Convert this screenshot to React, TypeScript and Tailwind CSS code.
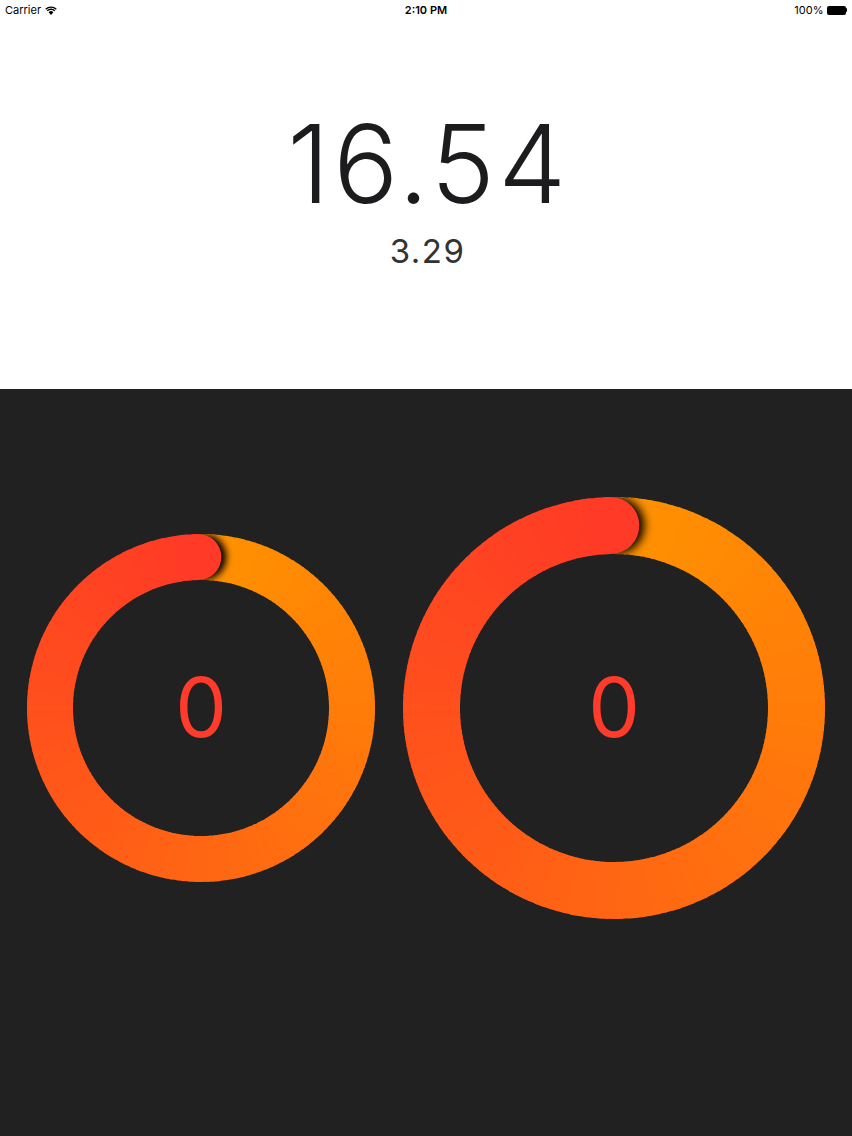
import { useId } from "react";

const START = [255, 146, 0];
const END = [255, 58, 38];

function mix(t: number) {
  const c = START.map((s, i) => Math.round(s + (END[i] - s) * t));
  return `rgb(${c[0]},${c[1]},${c[2]})`;
}

function Ring({ size, stroke }: { size: number; stroke: number }) {
  const id = useId().replace(/:/g, "");
  const c = size / 2;
  const r = (size - stroke) / 2;
  const end = 359;
  const n = 180;

  const xy = (a: number, rad: number) => [
    c + rad * Math.sin((a * Math.PI) / 180),
    c - rad * Math.cos((a * Math.PI) / 180),
  ];
  const pt = (a: number, rad: number) => {
    const [x, y] = xy(a, rad);
    return `${x.toFixed(2)} ${y.toFixed(2)}`;
  };

  const segs = [];
  for (let i = 0; i < n; i++) {
    const a0 = (end * i) / n;
    const a1 = Math.min(end, (end * (i + 1)) / n + 0.5);
    segs.push(
      <path
        key={i}
        d={`M ${pt(a0, r)} A ${r} ${r} 0 0 1 ${pt(a1, r)}`}
        stroke={mix(i / (n - 1))}
        strokeWidth={stroke}
        fill="none"
      />
    );
  }

  const R = size / 2;
  const ri = R - stroke;
  const wedge = `M ${pt(end, R)} A ${R} ${R} 0 0 1 ${pt(end + 40, R)} L ${pt(end + 40, ri)} A ${ri} ${ri} 0 0 0 ${pt(end, ri)} Z`;
  const [capX, capY] = xy(end, r);
  const [shX, shY] = xy(end + (5 * 180) / (Math.PI * r), r);

  return (
    <div className="relative shrink-0" style={{ width: size, height: size }}>
      <svg width={size} height={size} viewBox={`0 0 ${size} ${size}`}>
        <defs>
          <clipPath id={`w${id}`}>
            <path d={wedge} />
          </clipPath>
          <filter id={`b${id}`} x="-50%" y="-50%" width="200%" height="200%">
            <feGaussianBlur stdDeviation={stroke * 0.08} />
          </filter>
        </defs>
        {segs}
        <g clipPath={`url(#w${id})`}>
          <circle cx={shX} cy={shY} r={stroke / 2} fill="#000" opacity={1} filter={`url(#b${id})`} />
        </g>
        <circle cx={capX} cy={capY} r={stroke / 2} fill={mix(1)} />
      </svg>
      <div className="absolute inset-0 flex items-center justify-center">
        <span className="font-['Inter',sans-serif] text-[82px] font-normal leading-none text-[#ff3b2c]">
          0
        </span>
      </div>
    </div>
  );
}

function StatusBar() {
  return (
    <div className="flex h-5 items-center justify-between px-[5px] font-['Inter',sans-serif] text-[11px] text-black">
      <div className="flex w-[120px] items-center gap-[4px]">
        <span>Carrier</span>
        <svg width="12" height="9" viewBox="0 0 12 9">
          <path d="M6 9 L3.6 6.3 A3.4 3.4 0 0 1 8.4 6.3 Z" fill="#000" />
          <path d="M2.2 4.8 A5.4 5.4 0 0 1 9.8 4.8" stroke="#000" strokeWidth="1.3" fill="none" />
          <path d="M0.7 3.2 A7.6 7.6 0 0 1 11.3 3.2" stroke="#000" strokeWidth="1.3" fill="none" />
        </svg>
      </div>
      <span className="font-semibold">2:10 PM</span>
      <div className="flex w-[120px] items-center justify-end gap-[3px]">
        <span>100%</span>
        <div className="flex items-center">
          <div className="h-[9px] w-[19px] rounded-[2px] bg-black" />
          <div className="h-[4px] w-[1.5px] rounded-r-sm bg-black" />
        </div>
      </div>
    </div>
  );
}

export default function App() {
  return (
    <div className="flex min-h-[1136px] w-[852px] flex-col bg-white">
      <div className="flex h-[389px] flex-col">
        <StatusBar />
        <div className="flex flex-col items-center pt-[90px] font-['Inter',sans-serif]">
          <div className="pl-[5px] text-[108px] font-light leading-none tracking-[3.5px] text-[#1c1c1e]">16.54</div>
          <div className="mt-[17px] pl-[3px] text-[33px] font-normal leading-none tracking-[1.5px] text-[#333333]">3.29</div>
        </div>
      </div>
      <div className="flex-1 bg-[#212121] pt-[108px]">
        <div className="flex h-[422px] items-center justify-between px-[27px]">
          <Ring size={348} stroke={46} />
          <Ring size={422} stroke={57} />
        </div>
      </div>
    </div>
  );
}
